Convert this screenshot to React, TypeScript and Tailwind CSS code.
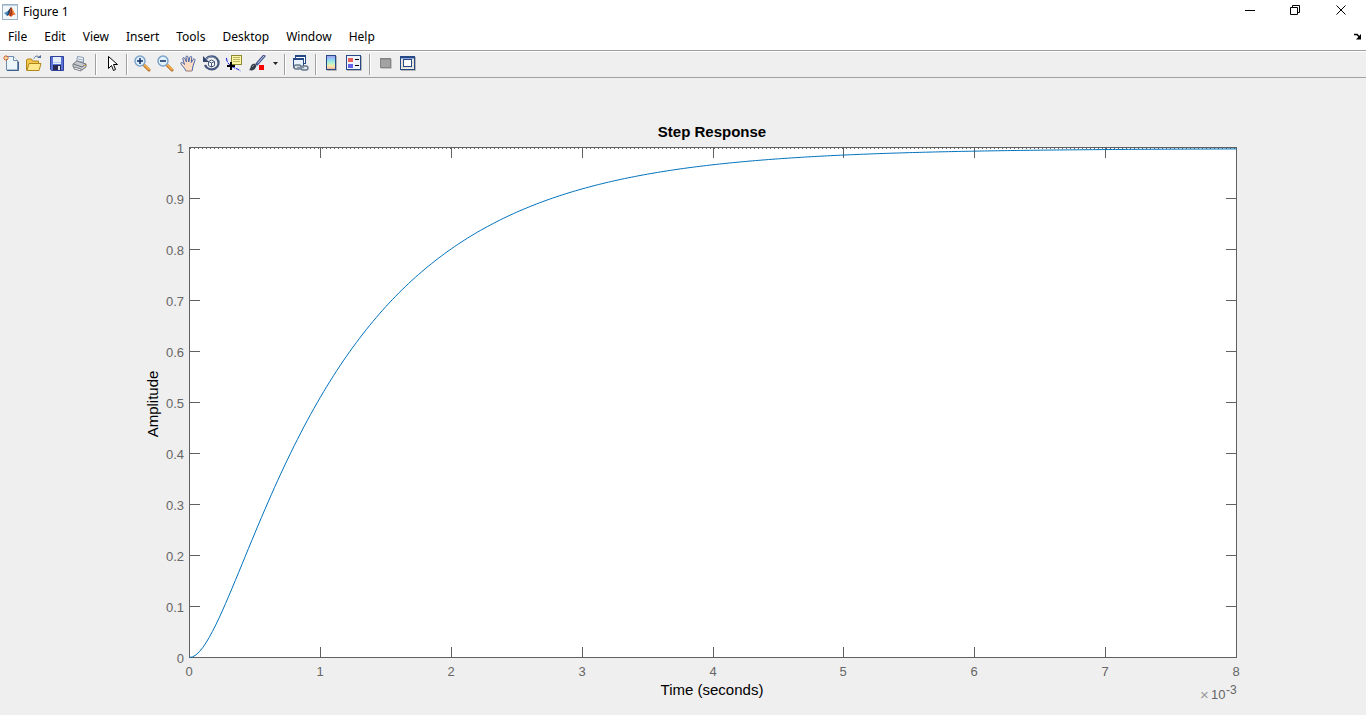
import { ReactNode } from "react";

type Tool = { label: string; icon: ReactNode };

const MENUS = ["File", "Edit", "View", "Insert", "Tools", "Desktop", "Window", "Help"];

/* ---------- chart geometry ---------- */

const LEFT = 189;
const RIGHT = 1236;
const TOP = 69;
const BOTTOM = 579;

// Poles of the plotted system, in 1/ms
const P1 = 0.91;
const P2 = 5.1;

const stepResponse = (t: number) =>
    1 - (P2 * Math.exp(-P1 * t) - P1 * Math.exp(-P2 * t)) / (P2 - P1);

const xOf = (t: number) => LEFT + (t / 8) * (RIGHT - LEFT);
const yOf = (v: number) => BOTTOM - v * (BOTTOM - TOP - 1);

const curve = Array.from({ length: 321 }, (_, i) => {
    const t = i / 40;
    return `${(xOf(t) + 0.5).toFixed(2)},${(yOf(stepResponse(t)) + 0.5).toFixed(2)}`;
}).join(" ");

const X_TICKS = [0, 1, 2, 3, 4, 5, 6, 7, 8];
const Y_TICKS = [0, 1, 2, 3, 4, 5, 6, 7, 8, 9, 10];

/* ---------- icons ---------- */

function Icon({ children }: { children: ReactNode }) {
    return (
        <svg width="18" height="17" viewBox="0 0 18 17" className="shrink-0" aria-hidden="true">
            {children}
        </svg>
    );
}

const NewIcon = (
    <Icon>
        <path d="M3.5 1.5h7l4 4v9.500h-11z" fill="#eef6fd" stroke="#6d8cae" />
        <path d="M10.500 1.500v4h4" fill="#fff" stroke="#6d8cae" />
        <path d="M4 15.500h11.500v-9" fill="none" stroke="#3f618c" />
        <path d="M3 0v6M0 3h6M1 1l4 4M5 1l-4 4" stroke="#d9642c" />
        <rect x="2" y="2" width="2" height="2" fill="#ffd98a" />
    </Icon>
);

const OpenIcon = (
    <Icon>
        <path d="M8 3.500c1-3 4-3 5-1" fill="none" stroke="#4c6d98" />
        <path d="M11 3h4v-3z" fill="#4c6d98" />
        <path d="M.5 15v-10l1-1h4l1 2h6v9z" fill="#f4c74e" stroke="#b18619" />
        <path d="M1 15.500l2-7h12l-2 7z" fill="#ffe98c" stroke="#b18619" />
    </Icon>
);

const SaveIcon = (
    <Icon>
        <path d="M1.500 1.500h13v14h-12l-1-1z" fill="#5a72d8" stroke="#2f409c" />
        <rect x="4" y="2" width="8" height="7" fill="#e4effb" />
        <path d="M4 7.500h8" stroke="#b4cdea" />
        <rect x="4" y="10" width="8" height="5" fill="#26284d" />
        <rect x="9" y="11" width="2" height="4" fill="#dfe3ee" />
    </Icon>
);

const PrintIcon = (
    <Icon>
        <path d="M4.500 7.500l1-6 6 1 0 6z" fill="#f4f8fc" stroke="#8499b1" />
        <path d="M6 4l5 1M6 6l5 1" stroke="#9aaabd" />
        <path d="M1 9l4-3 9 3v3l-4 3-9-3z" fill="#c7c9ce" stroke="#777b83" />
        <path d="M1.500 9l8.500 3 4-3" fill="none" stroke="#6c7078" />
        <path d="M2 12l7 2v2l-7-2z" fill="#f4f4f4" stroke="#7e848c" />
        <rect x="12" y="10" width="2" height="1" fill="#dba33c" />
    </Icon>
);

const PointerIcon = (
    <Icon>
        <path
            d="M5.500 1.500v12l3-3 2 5 2-1-2-5h4z"
            fill="#fff"
            stroke="#000"
        />
    </Icon>
);

function Magnifier({ plus }: { plus: boolean }) {
    return (
        <Icon>
            <path d="M10 10l5 5" stroke="#a8631b" strokeWidth="3" strokeLinecap="round" />
            <path d="M10 9.500l5 5" stroke="#f1ac4d" strokeWidth="2" strokeLinecap="round" />
            <circle cx="6" cy="6" r="5" fill="#dff2fd" stroke="#7da3c9" strokeWidth="1.500" />
            <path d="M3 6h6" stroke="#17346d" strokeWidth="1.600" />
            {plus && <path d="M6 3v6" stroke="#17346d" strokeWidth="1.600" />}
        </Icon>
    );
}

const HandIcon = (
    <Icon>
        <path
            d="M6 16C5 13 1 10 .8 8.300 1 7 2.500 7 4.500 9.500L2.800 4C2.500 2.500 4.200 2 4.800 3.500L6.500 7 6 2.200C6 .6 7.800.6 8 2.200L8.800 7 9.800 2.200C10.300.8 12 1.200 11.700 2.800L11.300 7.500 13 4.500C13.800 3.200 15.500 4 14.900 5.500L13 11 12 16z"
            fill="#fbdcc3"
            stroke="#4a66a8"
        />
        <path d="M6 16h6" stroke="#f0b68c" />
    </Icon>
);

const RotateIcon = (
    <Icon>
        <path d="M3 4a7 6.500 0 1 1-1 6" fill="none" stroke="#44587f" strokeWidth="2.200" />
        <path d="M3 4a7 6.500 0 0 1 10 0" fill="none" stroke="#8f9fbd" />
        <path d="M0 1v6h6z" fill="#33466f" />
        <path d="M5.500 6.500l3-1.500 3 1.500v4l-3 1.500-3-1.500zM5.500 6.500l3 1.500 3-1.500M8.500 8v4" fill="#fff" stroke="#44587f" />
    </Icon>
);

const DataCursorIcon = (
    <Icon>
        <path d="M.5 3c0 4 3 8 7 9.500s5 2 7 3.500" fill="none" stroke="#1414e6" strokeDasharray="4 1" />
        <rect x="5.500" y=".5" width="10" height="9" fill="#fdf6a8" stroke="#8d8a2e" />
        <path d="M7 2.500h7M7 4.500h7M7 6.500h7" stroke="#b9b35c" />
        <path d="M5 7v8M1 11h8" stroke="#000" strokeWidth="2" />
    </Icon>
);

const BrushIcon = (
    <Icon>
        <path d="M15 1L8 9" stroke="#46568c" strokeWidth="3" strokeLinecap="round" />
        <path d="M15 1L9 8" stroke="#c5d0ed" strokeLinecap="round" />
        <path d="M0 15c2-1 1-5 4-6 2-1 4 1 3 3-1 3-4 4-7 3z" fill="#353c4a" />
        <path d="M3 12l2-2" stroke="#89919e" />
        <rect x="10" y="10" width="5" height="5" fill="#f00" />
    </Icon>
);

const LinkIcon = (
    <Icon>
        <rect x="3.500" y=".5" width="10" height="8" fill="#fff" stroke="#274886" />
        <path d="M3 1h11" stroke="#274886" strokeWidth="2" />
        <rect x="1.500" y="3.500" width="10" height="9" fill="#e9f2fc" stroke="#274886" />
        <path d="M1 4h11" stroke="#274886" strokeWidth="2" />
        <rect x="2" y="10" width="7" height="4" rx="2" fill="#dfe5eb" stroke="#66788b" strokeWidth="1.400" />
        <rect x="9" y="11" width="7" height="4" rx="2" fill="#dfe5eb" stroke="#66788b" strokeWidth="1.400" />
        <path d="M5 12.500h7" stroke="#8394a6" strokeWidth="1.500" />
    </Icon>
);

const ColorbarIcon = (
    <Icon>
        <defs>
            <linearGradient id="colorbar" x1="0" y1="0" x2="0" y2="1">
                <stop offset="0" stopColor="#a396ec" />
                <stop offset=".3" stopColor="#8fd6f6" />
                <stop offset=".55" stopColor="#b4f2cc" />
                <stop offset=".75" stopColor="#f9eaa9" />
                <stop offset="1" stopColor="#f5a99e" />
            </linearGradient>
        </defs>
        <path d="M4 15.500h9.500V1" fill="none" stroke="#b5b5b5" />
        <rect x="3.500" y=".5" width="9" height="14" fill="url(#colorbar)" stroke="#274886" />
    </Icon>
);

const LegendIcon = (
    <Icon>
        <path d="M1 15.500h14.500V1" fill="none" stroke="#b5b5b5" />
        <rect x=".5" y=".5" width="14" height="14" fill="#eef3fb" stroke="#274886" />
        <rect x="2" y="3" width="5" height="4" fill="#e8605c" />
        <rect x="2" y="9" width="5" height="4" fill="#6262e8" />
        <path d="M9 4.500h4M9 10.500h4" stroke="#000" />
    </Icon>
);

const HideToolsIcon = (
    <Icon>
        <path d="M4 13.500h10.500V4" fill="none" stroke="#c4c4c4" />
        <rect x="3.500" y="3.500" width="10" height="9" fill="#a3a3a3" stroke="#858585" />
        <path d="M4 4.500h9" stroke="#929292" />
    </Icon>
);

const ShowToolsIcon = (
    <Icon>
        <path d="M1 15.500h14.500V2" fill="none" stroke="#b5b5b5" />
        <rect x=".5" y="1.500" width="14" height="13" fill="#e4e1d6" stroke="#274886" />
        <path d="M1 2h14" stroke="#274886" strokeWidth="2" />
        <path d="M1 3.500h13" stroke="#8fa8d6" />
        <rect x="3.500" y="4.500" width="8" height="7" fill="#fff" stroke="#274886" />
        <path d="M1 13.500h13M1 5.500h2M12 5.500h2M1 9.500h2M12 9.500h2" stroke="#fffdf2" strokeDasharray="1 1" />
    </Icon>
);

const GROUPS: Tool[][] = [
    [
        { label: "New Figure", icon: NewIcon },
        { label: "Open File", icon: OpenIcon },
        { label: "Save Figure", icon: SaveIcon },
        { label: "Print Figure", icon: PrintIcon },
    ],
    [{ label: "Edit Plot", icon: PointerIcon }],
    [
        { label: "Zoom In", icon: <Magnifier plus={true} /> },
        { label: "Zoom Out", icon: <Magnifier plus={false} /> },
        { label: "Pan", icon: HandIcon },
        { label: "Rotate 3D", icon: RotateIcon },
        { label: "Data Cursor", icon: DataCursorIcon },
        { label: "Brush/Select Data", icon: BrushIcon },
    ],
    [{ label: "Link Plot", icon: LinkIcon }],
    [
        { label: "Insert Colorbar", icon: ColorbarIcon },
        { label: "Insert Legend", icon: LegendIcon },
    ],
    [
        { label: "Hide Plot Tools", icon: HideToolsIcon },
        { label: "Show Plot Tools and Dock Figure", icon: ShowToolsIcon },
    ],
];

function MatlabLogo() {
    return (
        <svg width="16" height="16" viewBox="0 0 16 16" aria-hidden="true">
            <rect x=".5" y=".5" width="15" height="15" fill="#f3f7fa" stroke="#9db2c4" />
            <path d="M1 1.500h14" stroke="#b9cfe2" />
            <path d="M2 9l4-2 2 2-3 3z" fill="#4a8fc4" />
            <path d="M6 7l3-4 1 2-2 5-3 2z" fill="#24466c" />
            <path d="M9 3c2 2 3 6 5 8-2-1-3 0-5 2-1-1-2-2-3-1 2-2 2-6 3-9z" fill="#d9541e" />
            <path d="M9 4c1 3 0 6-1 8" fill="none" stroke="#8c2413" />
            <path d="M10 5l2 5" stroke="#f5a04b" />
        </svg>
    );
}

function TitleBar() {
    const control = "flex h-5 w-[46px] items-center justify-center";
    return (
        <header className="flex h-[25px] justify-between">
            <div className="flex items-center gap-[5px] pb-[2px] pl-[2px]">
                <MatlabLogo />
                <h1 className="text-[12px]">Figure 1</h1>
            </div>
            <div className="flex pr-[2px]">
                <button type="button" aria-label="Minimize" className={control}>
                    <svg width="11" height="11" viewBox="0 0 11 11">
                        <path d="M1 5.500h10" stroke="#000" />
                    </svg>
                </button>
                <button type="button" aria-label="Restore" className={control}>
                    <svg width="11" height="11" viewBox="0 0 11 11" fill="none" stroke="#000">
                        <path d="M.5 2.500h7v7h-7zM2.500 2.500v-2h7v7h-2" />
                    </svg>
                </button>
                <button type="button" aria-label="Close" className={control}>
                    <svg width="11" height="11" viewBox="0 0 11 11">
                        <path d="M.5.5l9 9M9.500.5l-9 9" stroke="#000" />
                    </svg>
                </button>
            </div>
        </header>
    );
}

function MenuBar() {
    return (
        <nav className="flex h-[25px] items-center justify-between pr-1 pb-[2px] pl-2">
            <div className="flex gap-[17px]">
                {MENUS.map(menu => (
                    <button type="button" key={menu} className="leading-5">
                        {menu}
                    </button>
                ))}
            </div>
            <button type="button" aria-label="Dock Figure">
                <svg width="8" height="7" viewBox="0 0 8 7">
                    <path d="M0 1.500h3l3 3" fill="none" stroke="#000" strokeWidth="1.500" />
                    <path d="M7 1v5.500H2z" fill="#000" />
                </svg>
            </button>
        </nav>
    );
}

function ToolBar() {
    return (
        <div
            role="toolbar"
            aria-label="Figure Toolbar"
            className="flex h-7 items-center border-y border-[#a0a0a0] bg-[#efefef] shadow-[inset_0_1px_0_#fff]"
        >
            {GROUPS.map((group, i) => (
                <div key={group[0].label} className="flex items-center">
                    {i > 0 && <span className="mx-[3px] h-[21px] w-[2px] border-r border-l border-r-white border-l-[#a0a0a0]" />}
                    {group.map(tool => (
                        <button
                            type="button"
                            key={tool.label}
                            aria-label={tool.label}
                            className="flex h-6 w-[23px] items-center pb-[2px] pl-[3px]"
                        >
                            {tool.icon}
                        </button>
                    ))}
                    {i === 2 && (
                        <button type="button" aria-label="Brush options" className="flex h-6 w-3 items-center justify-center pb-[2px]">
                            <svg width="5" height="3" viewBox="0 0 5 3">
                                <path d="M0 0h5L2.500 3z" fill="#222" />
                            </svg>
                        </button>
                    )}
                </div>
            ))}
        </div>
    );
}

function StepChart() {
    return (
        <svg
            viewBox="0 0 1366 637"
            role="img"
            aria-label="Step Response"
            className="block w-full font-['Liberation_Sans',Arial,sans-serif]"
        >
            <rect x={LEFT} y={TOP} width={RIGHT - LEFT} height={BOTTOM - TOP} fill="#fff" />

            <g stroke="#606060" fill="none" shapeRendering="crispEdges">
                <rect x={LEFT + 0.5} y={TOP + 0.5} width={RIGHT - LEFT} height={BOTTOM - TOP} />
                {X_TICKS.slice(1, -1).map(t => (
                    <path
                        key={t}
                        d={`M${Math.round(xOf(t)) + 0.5} ${TOP}v11M${Math.round(xOf(t)) + 0.5} ${BOTTOM}v-10`}
                    />
                ))}
                {Y_TICKS.slice(1, -1).map(v => (
                    <path key={v} d={`M${LEFT} ${BOTTOM - v * 51 + 0.5}h11M${RIGHT} ${BOTTOM - v * 51 + 0.5}h-10`} />
                ))}
                {/* steady state */}
                <path d={`M${LEFT + 1} ${TOP + 1.5}H${RIGHT}`} strokeDasharray="1 3" />
            </g>

            <polyline points={curve} fill="none" stroke="#0072bd" />

            <g fill="#666" fontSize="13">
                {X_TICKS.map(t => (
                    <text key={t} x={Math.round(xOf(t))} y="598" textAnchor="middle">
                        {t}
                    </text>
                ))}
                {Y_TICKS.map(v => (
                    <text key={v} x="184" y={BOTTOM + 6 - v * 51} textAnchor="end">
                        {v / 10}
                    </text>
                ))}
                <text x="1200" y="622" fontSize="15" fill="#999">×</text>
                <text x="1211" y="621">10</text>
                <text x="1226" y="616" fontSize="12">-3</text>
            </g>

            <g fontSize="15" textAnchor="middle">
                <text x="712" y="59" fontWeight="bold">Step Response</text>
                <text x="712" y="617">Time (seconds)</text>
                <text transform="translate(158 326) rotate(-90)">Amplitude</text>
            </g>
        </svg>
    );
}

export default function App() {
    return (
        <div className="min-h-screen bg-[#efefef] font-['Noto_Sans','Segoe_UI',sans-serif] text-[12px] text-black">
            <div className="bg-white">
                <TitleBar />
                <MenuBar />
            </div>
            <ToolBar />
            <main>
                <StepChart />
            </main>
        </div>
    );
}
